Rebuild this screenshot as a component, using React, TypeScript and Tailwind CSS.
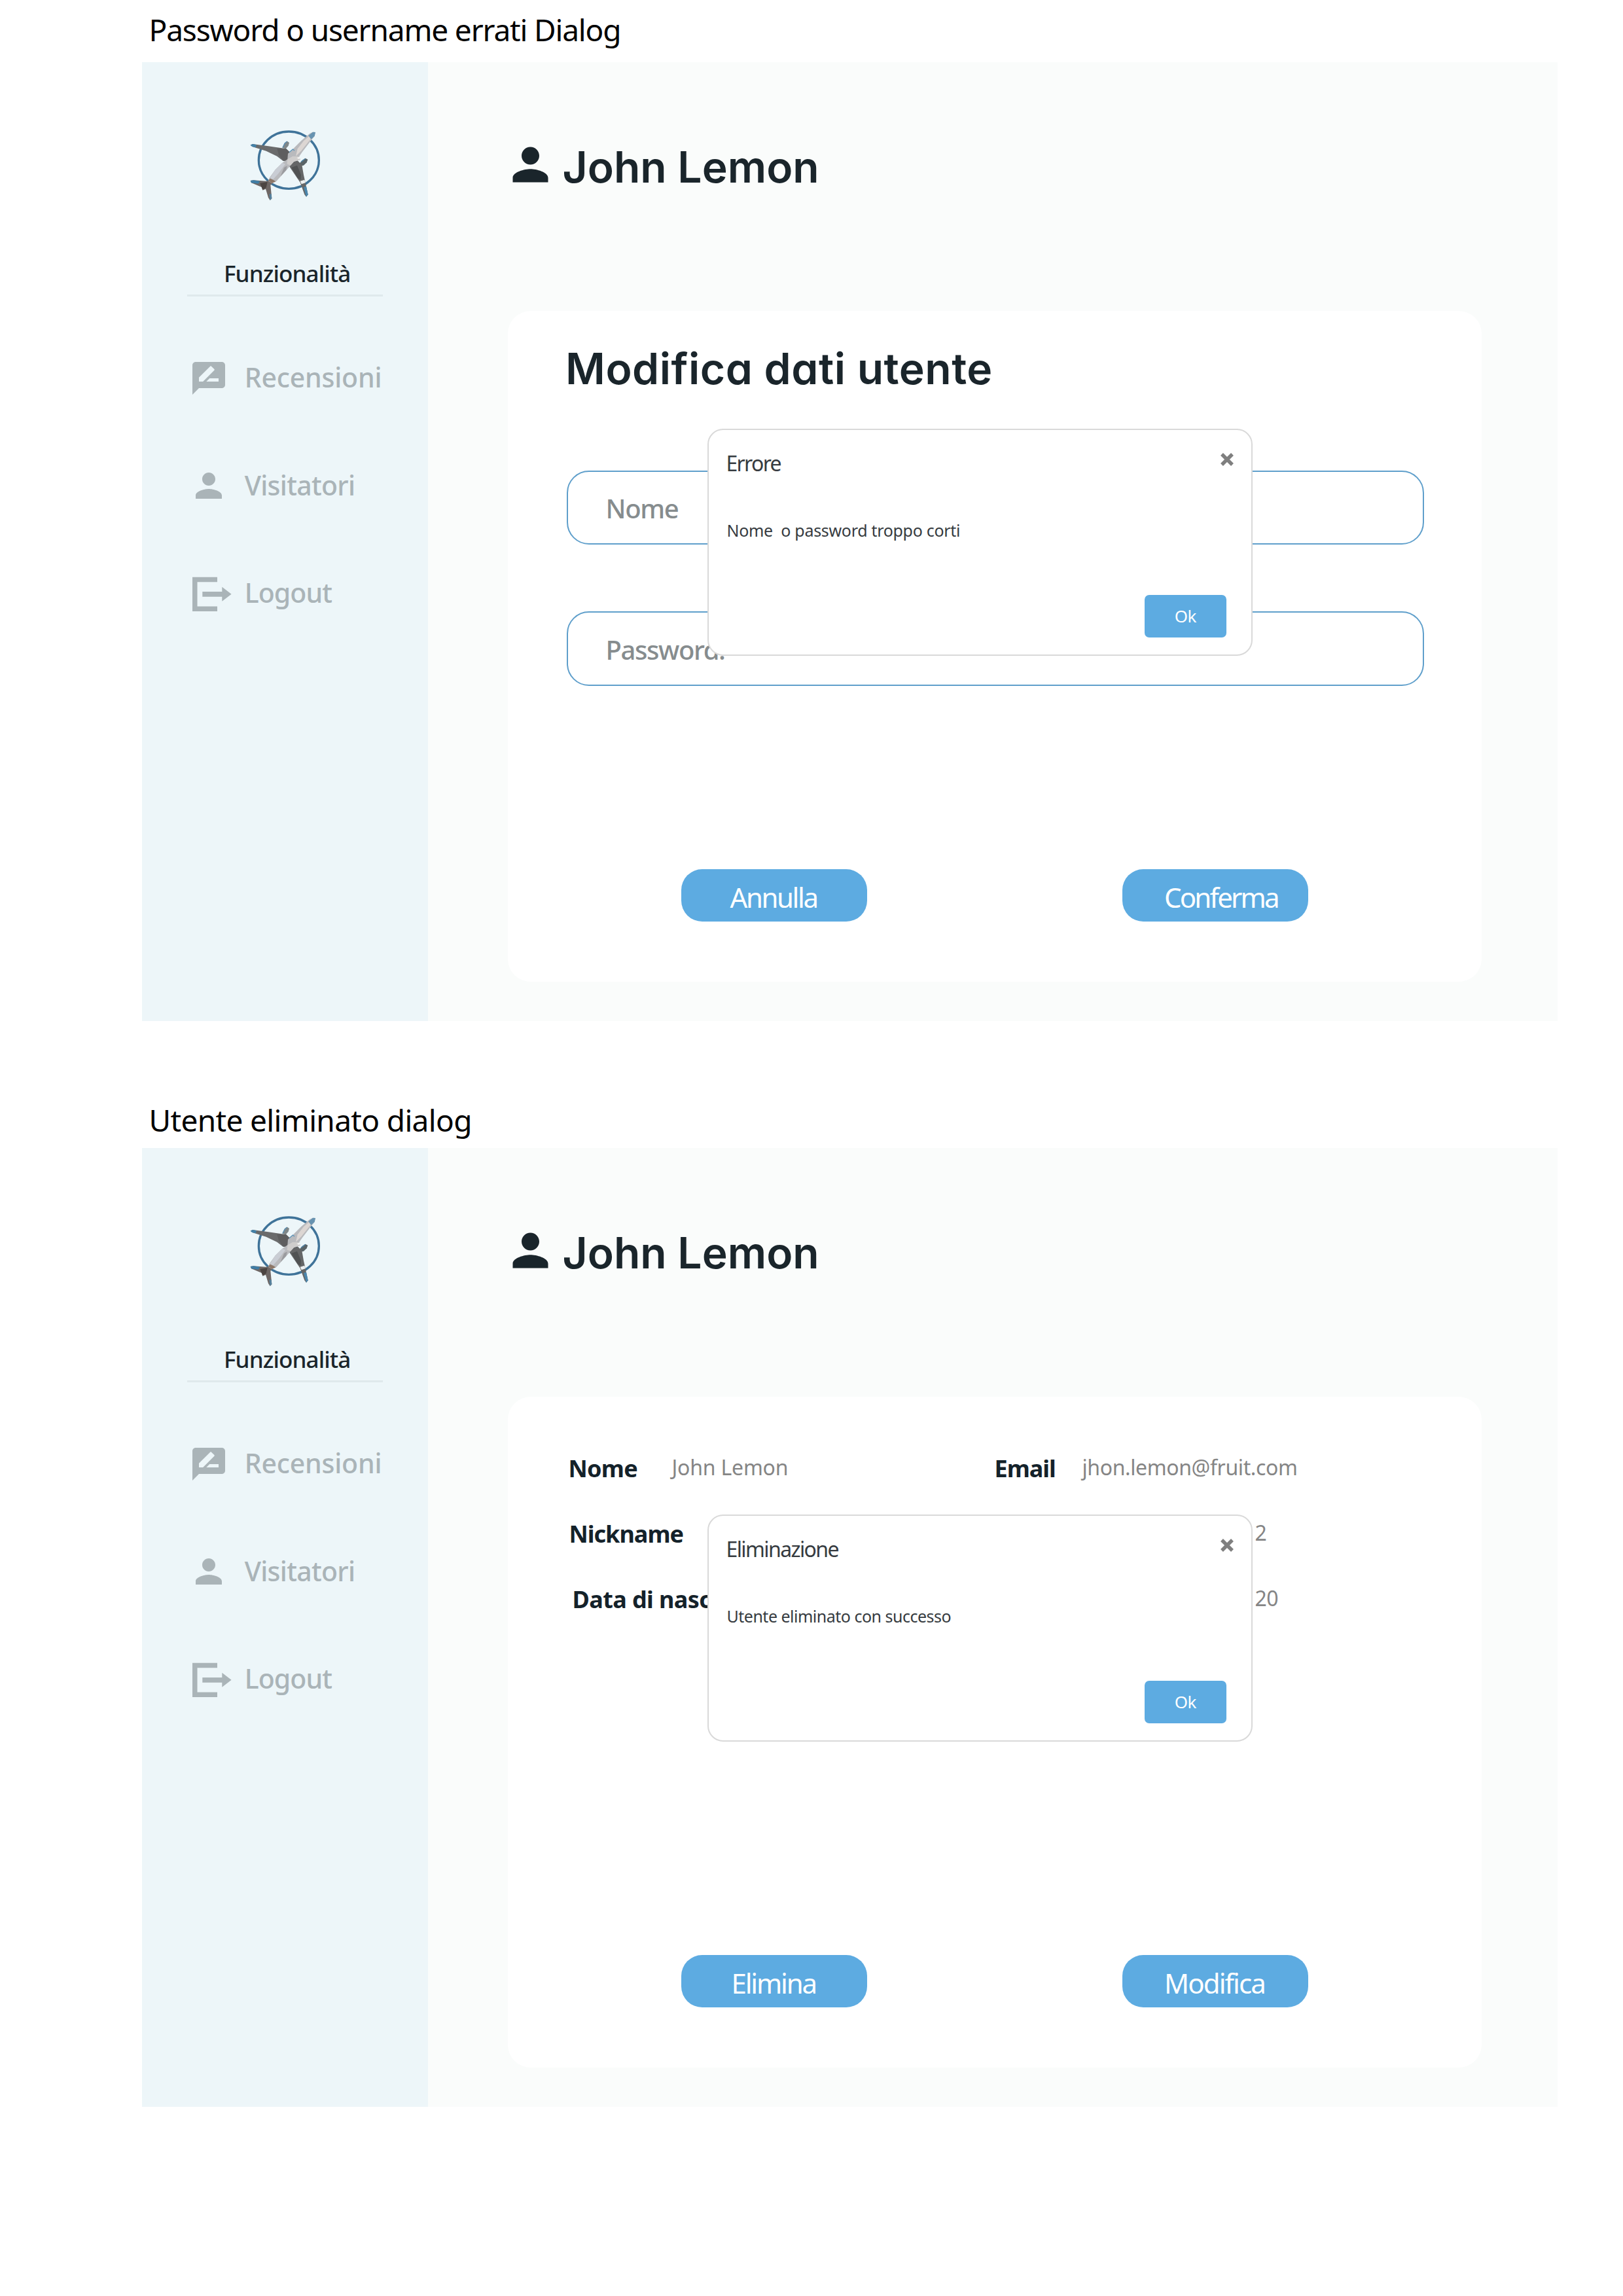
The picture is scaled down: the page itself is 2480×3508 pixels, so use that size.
import type { ReactNode } from 'react'

function PlaneLogo() {
  return (
    <svg className="ml-[143px] h-[140px] w-[150px]" viewBox="0 0 450 420" fill="none">
      <ellipse cx="244" cy="194" rx="138" ry="131" stroke="#3f7399" strokeWidth="10" />
      {/* engines */}
      <path d="M214 138 L224 116 L237 107 L246 114 L242 128 L230 142 Z" fill="#7f8789" />
      <path d="M216 136 L226 116 L236 108" stroke="#5a8db0" strokeWidth="4" />
      <path d="M290 212 L306 194 L320 185 L331 191 L326 205 L312 218 L294 222 Z" fill="#5a6468" />
      <path d="M300 202 L320 187" stroke="#4f87ad" strokeWidth="4" />
      {/* wings */}
      <path d="M68 125 L78 120 L150 130 L232 142 L250 160 L240 198 L218 198 L190 176 L140 152 L78 133 Z" fill="#6a6b6c" />
      <path d="M190 140 L232 142 L250 160 L240 198 L218 196 L198 170 Z" fill="#5e5e5f" />
      <path d="M68 125 L78 120 L96 124 L92 136 L76 132 Z" fill="#4381a8" />
      <path d="M248 206 L284 196 L304 216 L312 262 L332 352 L324 362 L316 352 L296 296 L262 246 L246 222 Z" fill="#656667" />
      <path d="M256 228 L282 218 L300 262 L298 284 L284 276 Z" fill="#505253" />
      <path d="M296 290 L316 284 L320 298 L302 304 Z" fill="#eef1f2" />
      <path d="M312 318 L324 314 L332 352 L324 362 Z" fill="#4a86ad" />
      {/* tail */}
      <path d="M68 288 L82 286 L140 290 L168 284 L172 296 L160 308 L166 370 L158 378 L150 366 L138 326 L124 332 L120 318 L72 298 Z" fill="#6e6765" />
      <path d="M68 288 L82 286 L112 290 L104 302 L72 298 Z" fill="#3f7da5" />
      <path d="M112 300 L146 294 L140 320 L124 330 Z" fill="#4c4542" />
      <path d="M154 350 L164 348 L166 370 L158 378 Z" fill="#55809c" />
      {/* fuselage */}
      <path d="M366 66 L362 84 L340 112 L306 156 L292 176 L296 192 L268 200 L252 218 L222 252 L186 292 L166 300 L150 290 L156 274 L182 238 L214 206 L238 190 L240 164 L262 144 L300 106 L340 72 L354 65 Z" fill="#b9babd" />
      <path d="M340 82 L350 90 L302 150 L276 176 L284 142 L312 106 Z" fill="#dcd6d3" />
      <path d="M366 66 L362 84 L346 98 L334 82 L354 65 Z" fill="#6793b1" />
      <path d="M238 190 L262 176 L292 178 L296 192 L268 200 L252 218 L236 212 Z" fill="#cfcdcc" />
      <path d="M214 206 L228 212 L196 256 L172 282 L158 276 L182 238 Z" fill="#c9cdd4" />
      <path d="M222 228 L236 220 L232 240 L206 268 Z" fill="#9a9b9f" />
      <path d="M150 288 L158 278 L172 284 L184 292 L166 300 Z" fill="#8d7768" />
      <path d="M246 158 L262 144 L270 150" stroke="#5b93b8" strokeWidth="4" />
      <path d="M280 184 L296 178 L292 190 Z" fill="#f5f5f4" />
    </svg>
  )
}

function PersonIcon({ className }: { className: string }) {
  return (
    <svg className={className} viewBox="0 0 24 24" fill="currentColor">
      <path d="M12 12c2.210 0 4-1.790 4-4s-1.790-4-4-4-4 1.790-4 4 1.790 4 4 4zm0 2c-2.670 0-8 1.340-8 4v2h16v-2c0-2.660-5.330-4-8-4z" />
    </svg>
  )
}

function ReviewIcon() {
  return (
    <svg className="mt-[2px] size-[60px]" viewBox="0 0 24 24" fill="currentColor">
      <path d="M20 2H4c-1.100 0-1.990.9-1.990 2L2 22l4-4h14c1.100 0 2-.9 2-2V4c0-1.100-.9-2-2-2zM6 14v-2.470l6.880-6.880c.2-.2.510-.2.710 0l1.770 1.770c.2.2.2.510 0 .710L8.470 14H6zm12 0h-7.500l2-2H18v2z" />
    </svg>
  )
}

function LogoutIcon() {
  return (
    <svg className="size-[60px] overflow-visible" viewBox="0 0 60 60" fill="currentColor">
      <path d="M5 6.700H43V14.200H12.500V51.500H43V59H5Z" />
      <path d="M20.300 29H50.300V21.700L64.600 32.800L50.300 43.700V36.700H20.300Z" />
    </svg>
  )
}

function Sidebar() {
  return (
    <aside className="flex w-[436.5px] shrink-0 flex-col bg-[#edf6f9] pt-[85px]">
      <PlaneLogo />
      <h2 className="mt-[74px] ml-[125px] text-[35px] leading-[48px] font-medium tracking-[-0.9px] text-[#1a252b]">
        Funzionalità
      </h2>
      <hr className="mt-[8px] ml-[69px] h-[3px] w-[299px] border-0 bg-[#dfe9ec]" />
      <nav className="mt-[93px] ml-[71.7px] flex flex-col gap-[104.5px] text-[41px] leading-[60px] font-medium text-[#aab4b8]">
        <a className="flex h-[60px] gap-[25px] tracking-[-0.2px]">
          <ReviewIcon />
          Recensioni
        </a>
        <a className="flex h-[60px] gap-[25px] tracking-[-0.7px]">
          <PersonIcon className="mt-[1px] size-[60px]" />
          Visitatori
        </a>
        <a className="flex h-[60px] gap-[25px] tracking-[-0.9px]">
          <LogoutIcon />
          Logout
        </a>
      </nav>
    </aside>
  )
}

function Dialog({ title, children }: { title: ReactNode; children: ReactNode }) {
  return (
    <div className="absolute top-[180px] left-[305px] flex h-[347px] w-[833px] flex-col rounded-[24px] border-2 border-[#d9d9d9] bg-white pt-[27px] pl-[27px] text-[#363b40]">
      <div className="flex h-[48px] items-start justify-between pr-[27px]">
        <h3 className="text-[32px] leading-[48px]">{title}</h3>
        <svg className="mt-[8px] h-[20px] w-[20px]" viewBox="0 0 20 20" stroke="#7f7f7f" strokeWidth="5.5">
          <path d="M2 2L18 18M18 2L2 18" />
        </svg>
      </div>
      <p className="mt-[58px] ml-[1px] text-[25px] leading-[40px] whitespace-pre">{children}</p>
      <button className="mt-[78.5px] mr-[37.5px] h-[65px] w-[125.5px] self-end rounded-[7px] bg-[#5dabe1] text-[26px] tracking-[-0.5px] text-white">
        Ok
      </button>
    </div>
  )
}

function Field({ label }: { label: string }) {
  return (
    <div className="flex h-[113.4px] w-[1310px] items-center rounded-[34px] border-2 border-[#5f9fcb] pt-[3px] pl-[58px] text-[40px] font-medium tracking-[-1.4px] text-[#868c8e]">
      {label}
    </div>
  )
}

function Panel({ children }: { children: ReactNode }) {
  return (
    <section className="ml-[217px] flex h-[1465px] w-[2163px]">
      <Sidebar />
      <main className="flex-1 bg-[#fafcfb] pt-[115.5px] pl-[116.5px]">
        <header className="flex h-[84.5px] items-start gap-[8.5px] text-[#1a252b]">
          <PersonIcon className="size-[81px]" />
          <h1 className="mt-[4px] font-['Inter',sans-serif] text-[66px] leading-[80px] font-semibold">John Lemon</h1>
        </header>
        <div className="relative mt-[180px] ml-[5.5px] h-[1025px] w-[1488.5px] rounded-[35px] bg-white">
          {children}
        </div>
      </main>
    </section>
  )
}

const actionButton = 'h-[80px] w-[284px] rounded-[32px] bg-[#5dabe1] pt-[5px] text-left text-[42px] leading-[75px] text-white'
const label = 'mt-[1px] text-[36px] font-bold text-[#14222a]'
const value = '-mt-[1.5px] text-[32px] text-[#858585]'

export default function App() {
  return (
    <div className="h-[3508px] w-[2480px] overflow-hidden bg-white font-['Noto_Sans',sans-serif]">
      <h2 className="h-[95px] pt-[15px] pl-[227.5px] text-[46px] leading-[60px] tracking-[-1.15px] text-black">
        Password o username errati Dialog
      </h2>
      <Panel>
        <h2 className="pt-[47.5px] pl-[88.5px] font-['Inter',sans-serif] text-[66px] leading-[80px] font-semibold tracking-[0.5px] text-[#1a252b] [font-feature-settings:'cv11']">
          Modifica dati utente
        </h2>
        <div className="mt-[116px] ml-[90px] flex flex-col gap-[102.6px]">
          <Field label="Nome" />
          <Field label="Password:" />
        </div>
        <div className="mt-[280px] ml-[265px] flex gap-[390.5px]">
          <button className={actionButton + ' pl-[75px] tracking-[-2.4px]'}>Annulla</button>
          <button className={actionButton + ' pl-[64px] tracking-[-2.8px]'}>Conferma</button>
        </div>
        <Dialog title={<span className="tracking-[-1.7px]">Errore</span>}>
          <span className="tracking-[-0.3px]">{'Nome  o password troppo corti'}</span>
        </Dialog>
      </Panel>

      <h2 className="h-[194px] pt-[121px] pl-[227.5px] text-[46px] leading-[60px] tracking-[-0.65px] text-black">
        Utente eliminato dialog
      </h2>
      <Panel>
        <dl className="grid h-[853px] grid-cols-[158px_493px_134px_1fr] grid-rows-[100px_100px_100px] pt-[79px] pl-[93px] leading-[60px]">
          <dt className={label + ' tracking-[-0.7px]'}>Nome</dt>
          <dd className={value + ' tracking-[-0.2px]'}>John Lemon</dd>
          <dt className={label + ' tracking-[-1px]'}>Email</dt>
          <dd className={value + ' tracking-[-0.4px]'}>jhon.lemon@fruit.com</dd>
          <dt className={label + ' col-span-3 pl-[1px] tracking-[-1px]'}>Nickname</dt>
          <dd className={value + ' pl-[264px]'}>2</dd>
          <dt className={label + ' col-span-3 pl-[6px] tracking-[-0.6px]'}>Data di nascita</dt>
          <dd className={value + ' pl-[264px] tracking-[-0.5px]'}>20</dd>
        </dl>
        <div className="ml-[265px] flex gap-[390.5px]">
          <button className={actionButton + ' pl-[77px] tracking-[-2.2px]'}>Elimina</button>
          <button className={actionButton + ' pl-[64px] tracking-[-1.9px]'}>Modifica</button>
        </div>
        <Dialog title={<span className="tracking-[-1.6px]">Eliminazione</span>}>
          <span className="tracking-[-0.5px]">Utente eliminato con successo</span>
        </Dialog>
      </Panel>
    </div>
  )
}
